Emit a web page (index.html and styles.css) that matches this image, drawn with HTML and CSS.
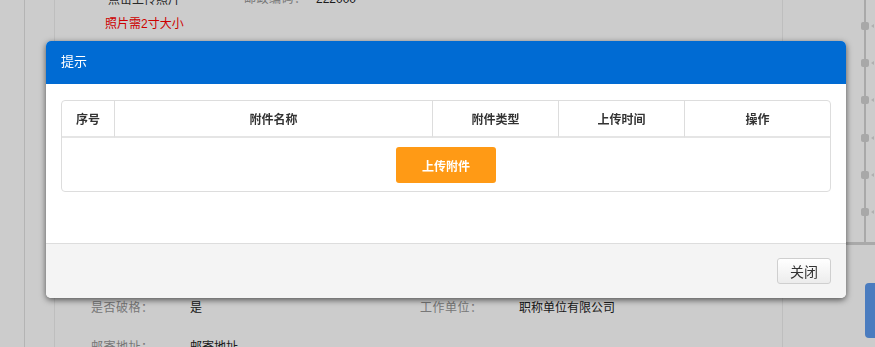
FILE: index.html
```html
<!DOCTYPE html>
<html lang="zh">
<head>
<meta charset="utf-8">
<link rel="stylesheet" href="styles.css">
</head>
<body>
<div class="page">
  <div class="gutter g1"></div>
  <div class="gutter g2"></div>
  <main class="main">
    <div class="top">
      <div class="photo">
        <div class="photo-link">点击上传照片</div>
        <div class="photo-tip">照片需2寸大小</div>
      </div>
      <div class="field top-field"><span class="label">邮政编码：</span><span class="value">222000</span></div>
    </div>
    <div class="fields">
      <div class="field"><span class="label">是否破格：</span><span class="value">是</span></div>
      <div class="field f2"><span class="label">工作单位：</span><span class="value">职称单位有限公司</span></div>
      <div class="field"><span class="label">邮寄地址：</span><span class="value">邮寄地址</span></div>
    </div>
  </main>
  <aside class="side">
    <div class="timeline">
      <div class="tl-item"><span class="dot"></span><span class="arrow"></span></div>
      <div class="tl-item"><span class="dot"></span><span class="arrow"></span></div>
      <div class="tl-item"><span class="dot"></span><span class="arrow"></span></div>
      <div class="tl-item"><span class="dot"></span><span class="arrow"></span></div>
      <div class="tl-item"><span class="dot"></span><span class="arrow"></span></div>
      <div class="tl-item"><span class="dot"></span><span class="arrow"></span></div>
      <div class="tl-end"></div>
    </div>
    <div class="side-btn"></div>
  </aside>
</div>
<div class="mask"></div>
<div class="modal">
  <div class="modal-head">提示</div>
  <div class="modal-body">
    <table class="grid">
      <thead>
        <tr>
          <th class="c1">序号</th>
          <th class="c2">附件名称</th>
          <th class="c3">附件类型</th>
          <th class="c4">上传时间</th>
          <th class="c5">操作</th>
        </tr>
      </thead>
      <tbody>
        <tr>
          <td colspan="5" class="upload-cell"><button class="upload">上传附件</button></td>
        </tr>
      </tbody>
    </table>
  </div>
  <div class="modal-foot">
    <button class="close">关闭</button>
  </div>
</div>
</body>
</html>
```

FILE: styles.css
```css
* { box-sizing: border-box; }
html, body { margin: 0; padding: 0; }
body {
  width: 875px;
  height: 347px;
  overflow: hidden;
  background: #fff;
  font-family: "Liberation Sans", "Noto Sans CJK SC", sans-serif;
  font-size: 12px;
  color: #333;
}
.page {
  display: flex;
  height: 347px;
}
.gutter { flex: none; height: 100%; }
.g1 { width: 25px; border-right: 1px solid #e2e2e2; background: #fff; }
.g2 { width: 30px; border-right: 1px solid #eee; }
.main {
  flex: none;
  width: 728px;
  border-right: 1px solid #eee;
  padding-left: 36px;
}
.top {
  display: flex;
  margin-top: -9px;
  height: 309px;
}
.photo {
  width: 153px;
  padding-left: 14px;
  font-size: 12px;
  line-height: 18px;
}
.photo-link { color: #333; padding-left: 3px; font-size: 12px; }
.photo-tip { color: #ff0000; margin-top: 6px; }
.field { display: flex; font-size: 12px; line-height: 16px; }
.label { color: #959595; width: 73px; letter-spacing: 0.5px; }
.top-field .label { width: 72px; }
.value { color: #222; }
.fields {
  display: grid;
  grid-template-columns: 329px 1fr;
  row-gap: 23px;
}
.fields .label { width: 99px; }
.side {
  flex: 1;
  position: relative;
  display: flex;
  flex-direction: column;
}
.timeline {
  margin-left: 72px;
  width: 20px;
  height: 245px;
  position: relative;
  display: flex;
  flex-direction: column;
  padding-top: 22px;
}
.timeline::before {
  content: "";
  position: absolute;
  left: 9px;
  top: 0;
  bottom: 3px;
  width: 2px;
  background: #d4d4d4;
}
.tl-item {
  height: 39px;
  display: flex;
  align-items: flex-start;
  position: relative;
}
.dot {
  margin-left: 6px;
  width: 8px;
  height: 8px;
  border-radius: 2px;
  background: #d2d2d2;
}
.arrow {
  margin-left: 2px;
  margin-top: 2px;
  width: 0;
  height: 0;
  border-top: 2px solid transparent;
  border-bottom: 2px solid transparent;
  border-right: 3px solid #ddd;
}
.tl-end {
  position: absolute;
  left: 0;
  bottom: 0;
  width: 30px;
  height: 3px;
  background: #d4d4d4;
  margin-left: -9px;
}
.side-btn {
  margin-top: 38px;
  margin-left: 82px;
  width: 20px;
  height: 55px;
  border-radius: 4px;
  background: #5d9cef;
}
.mask {
  position: fixed;
  inset: 0;
  background: rgba(0, 0, 0, 0.2);
}
.modal {
  position: absolute;
  left: 46px;
  top: 41px;
  width: 800px;
  height: 257px;
  background: #fff;
  border-radius: 5px;
  box-shadow: 0 2px 6px rgba(0, 0, 0, 0.6);
  overflow: hidden;
  display: flex;
  flex-direction: column;
}
.modal-head {
  height: 43px;
  background: #006bd3;
  color: #fff;
  font-family: "Noto Sans CJK SC", sans-serif;
  font-size: 13px;
  line-height: 40px;
  padding-left: 15px;
}
.modal-body {
  height: 159px;
  padding: 16px 15px 0;
}
.grid {
  width: 770px;
  border-collapse: separate;
  border-spacing: 0;
  border: 1px solid #ddd;
  border-radius: 4px;
  table-layout: fixed;
}
.grid th {
  height: 37px;
  font-family: "Noto Sans CJK SC", sans-serif;
  font-size: 12px;
  font-weight: bold;
  color: #333;
  text-align: center;
  border-bottom: 2px solid #e5e5e5;
  border-left: 1px solid #ddd;
  padding: 0;
}
.grid th.c1 { border-left: 0; width: 52px; }
.grid th.c2 { width: 318px; }
.grid th.c3 { width: 126px; }
.grid th.c4 { width: 126px; }
.upload-cell {
  text-align: center;
  padding: 9px 0 8px;
}
.upload {
  width: 100px;
  height: 36px;
  border: 0;
  border-radius: 3px;
  background: #ff9a15;
  color: #fff;
  font-family: "Noto Sans CJK SC", sans-serif;
  font-size: 12px;
  font-weight: bold;
  cursor: pointer;
  vertical-align: top;
}
.modal-foot {
  flex: 1;
  background: #f4f4f4;
  border-top: 1px solid #ddd;
  display: flex;
  justify-content: flex-end;
  align-items: flex-start;
  padding: 14px 15px 0 0;
}
.close {
  width: 54px;
  height: 26px;
  border: 1px solid #cfcfcf;
  border-radius: 3px;
  background: linear-gradient(#fff, #ececec);
  font-family: "Noto Sans CJK SC", sans-serif;
  font-size: 14px;
  color: #333;
  padding: 0;
  line-height: 22px;
}
```
